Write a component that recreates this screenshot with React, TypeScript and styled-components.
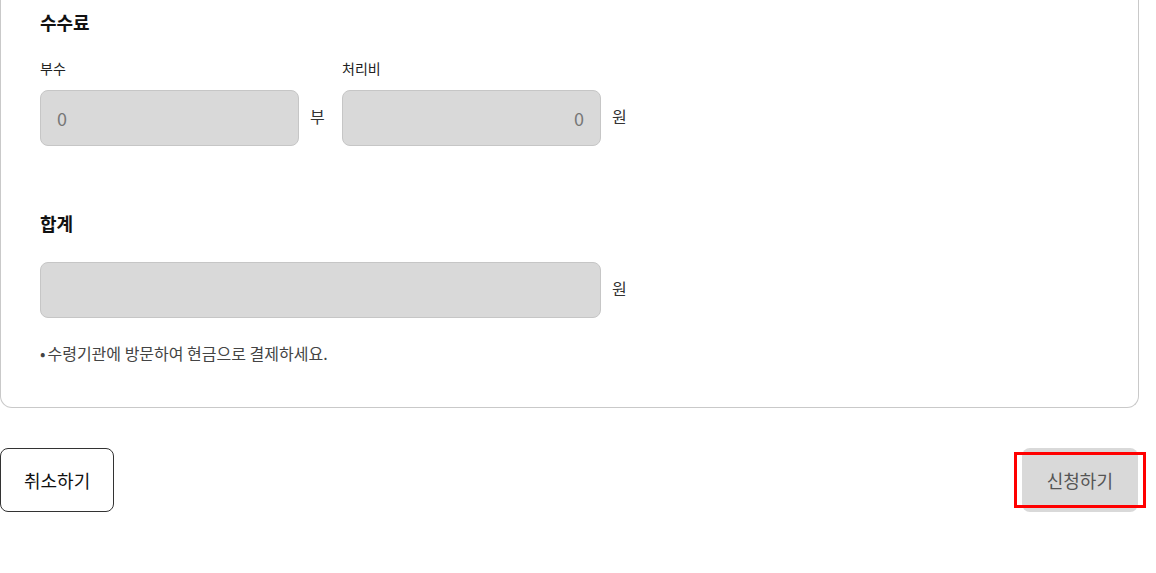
import React from "react";
import styled, { createGlobalStyle } from "styled-components";

const GlobalStyle = createGlobalStyle`
  html, body {
    margin: 0;
    padding: 0;
    background: #ffffff;
  }
  body {
    font-family: "Noto Sans CJK KR", "Noto Sans", sans-serif;
    color: #111111;
  }
  * {
    box-sizing: border-box;
  }
`;

const Page = styled.div`
  width: 1156px;
  height: 573px;
  overflow: hidden;
`;

const Card = styled.section`
  width: 1139px;
  padding: 10px 39px 42px;
  border: 1px solid #c9c9c9;
  border-top: none;
  border-radius: 0 0 12px 12px;
`;

const SectionTitle = styled.h3<{ $gap: number }>`
  margin: 0 0 ${({ $gap }) => $gap}px;
  font-size: 18px;
  line-height: 24px;
  font-weight: 700;
  color: #111111;
`;

const FeeRow = styled.div`
  display: flex;
  align-items: flex-end;
  margin-bottom: 65px;
`;

const Field = styled.div`
  display: flex;
  flex-direction: column;
`;

const Label = styled.label`
  font-size: 14px;
  line-height: 20px;
  color: #222222;
  margin-bottom: 12px;
`;

const InputLine = styled.div`
  display: flex;
  align-items: center;
`;

const Input = styled.input<{ $width: number; $align?: "left" | "right" }>`
  width: ${({ $width }) => $width}px;
  height: 56px;
  padding: 0 16px;
  border: 1px solid #c6c6c6;
  border-radius: 8px;
  background: #d9d9d9;
  font-family: inherit;
  font-size: 18px;
  color: #777777;
  text-align: ${({ $align }) => $align ?? "left"};
  outline: none;

  &::placeholder {
    color: #777777;
  }
`;

const Unit = styled.span<{ $after?: number }>`
  margin: -4px ${({ $after }) => $after ?? 0}px 0 11px;
  font-size: 16px;
  line-height: 20px;
  color: #333333;
  width: 16px;
`;

const Notice = styled.p`
  margin: 23px 0 0;
  font-size: 16px;
  line-height: 24px;
  color: #444444;

  &::before {
    content: "•";
    margin-right: 2px;
  }
`;

const ButtonRow = styled.div`
  width: 1138px;
  margin-top: 40px;
  display: flex;
  justify-content: space-between;
  align-items: center;
`;

const Button = styled.button<{ $primary?: boolean }>`
  position: relative;
  height: 64px;
  padding: 0 ${({ $primary }) => ($primary ? 25 : 23)}px;
  border-radius: 8px;
  border: ${({ $primary }) => ($primary ? "none" : "1px solid #333333")};
  background: ${({ $primary }) => ($primary ? "#d9d9d9" : "#ffffff")};
  color: ${({ $primary }) => ($primary ? "#555555" : "#111111")};
  font-family: inherit;
  font-size: 18px;
  cursor: pointer;
`;

const Highlight = styled.span`
  position: absolute;
  left: -8px;
  right: -8px;
  top: 4px;
  bottom: 4px;
  border: 3px solid #ff0000;
  pointer-events: none;
`;

export default function App() {
  return (
    <Page>
      <GlobalStyle />
      <Card>
        <SectionTitle $gap={24}>수수료</SectionTitle>
        <FeeRow>
          <Field>
            <Label>부수</Label>
            <InputLine>
              <Input $width={259} placeholder="0" readOnly />
              <Unit $after={16}>부</Unit>
            </InputLine>
          </Field>
          <Field>
            <Label>처리비</Label>
            <InputLine>
              <Input $width={259} $align="right" placeholder="0" readOnly />
              <Unit>원</Unit>
            </InputLine>
          </Field>
        </FeeRow>

        <SectionTitle $gap={27}>합계</SectionTitle>
        <InputLine>
          <Input $width={561} readOnly />
          <Unit>원</Unit>
        </InputLine>
        <Notice>수령기관에 방문하여 현금으로 결제하세요.</Notice>
      </Card>

      <ButtonRow>
        <Button>취소하기</Button>
        <Button $primary>
          신청하기
          <Highlight />
        </Button>
      </ButtonRow>
    </Page>
  );
}
